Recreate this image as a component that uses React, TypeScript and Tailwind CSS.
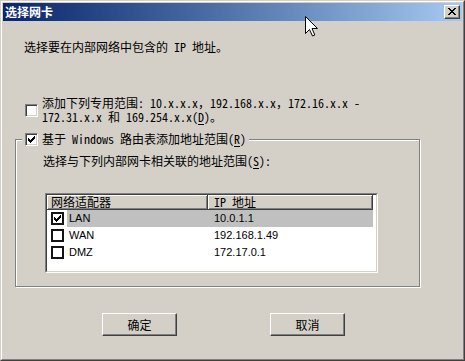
import React from "react";

const CHECK = [
  "......#",
  ".....##",
  "#...###",
  "##.###.",
  "#####..",
  ".###...",
  "..#....",
];

const XGLYPH = [
  "##....##",
  ".##..##.",
  "..####..",
  "...##...",
  "..####..",
  ".##..##.",
  "##....##",
];

function Pixels({ rows, color = "#000" }: { rows: string[]; color?: string }) {
  const w = rows[0].length;
  const h = rows.length;
  const rects: React.ReactNode[] = [];
  rows.forEach((r, y) =>
    r.split("").forEach((c, x) => {
      if (c === "#") rects.push(<rect key={`${x}-${y}`} x={x} y={y} width={1} height={1} fill={color} />);
    })
  );
  return (
    <svg width={w} height={h} viewBox={`0 0 ${w} ${h}`} shapeRendering="crispEdges" className="block">
      {rects}
    </svg>
  );
}

function Check3D({ checked }: { checked?: boolean }) {
  return (
    <span className="shrink-0 w-[13px] h-[13px] bg-white border border-t-[#808080] border-l-[#808080] border-r-white border-b-white shadow-[inset_1px_1px_0_#404040,inset_-1px_-1px_0_#d4d0c8] flex items-center justify-center">
      {checked ? <Pixels rows={CHECK} /> : null}
    </span>
  );
}

function ListCheck({ checked }: { checked?: boolean }) {
  return (
    <span className="shrink-0 w-[13px] h-[13px] bg-white border-2 border-[#141414] flex items-center justify-center">
      {checked ? <Pixels rows={CHECK} /> : null}
    </span>
  );
}

const rows = [
  { name: "LAN", ip: "10.0.1.1", checked: true, selected: true },
  { name: "WAN", ip: "192.168.1.49", checked: false, selected: false },
  { name: "DMZ", ip: "172.17.0.1", checked: false, selected: false },
];

export default function App() {
  return (
    <div className="relative w-[465px] h-[361px] overflow-hidden bg-[#d4d0c8] text-black text-[12px] [font-family:'Noto_Sans_Mono_CJK_SC','Noto_Sans_CJK_SC',sans-serif] border border-t-[#d4d0c8] border-l-[#d4d0c8] border-r-[#404040] border-b-[#404040]">
      <div className="h-full flex flex-col p-[1px] border border-t-white border-l-white border-r-[#808080] border-b-[#808080]">
        {/* Title bar */}
        <div className="h-[18px] shrink-0 flex items-center justify-between pl-[2px] pr-[2px] bg-linear-to-r from-[#0a246a] to-[#a6caf0]">
          <span className="text-white font-bold text-[12px] leading-[14px] [font-family:'Noto_Sans_CJK_SC',sans-serif]">选择网卡</span>
          <button className="w-[16px] h-[14px] bg-[#d4d0c8] border border-t-white border-l-white border-r-[#404040] border-b-[#404040] shadow-[inset_-1px_-1px_0_#808080] flex items-center justify-center pl-[0px] pb-[1px]">
            <Pixels rows={XGLYPH} />
          </button>
        </div>

        {/* Body */}
        <div className="flex flex-col flex-1">
          <div className="mt-[19px] ml-[21px] leading-[14px] whitespace-pre">选择要在内部网络中包含的 IP 地址。</div>

          <div className="mt-[42px] ml-[22px] flex items-center gap-[4px]">
            <Check3D />
            <div className="leading-[14px] whitespace-pre">
              <div>添加下列专用范围: 10.x.x.x，192.168.x.x，172.16.x.x -</div>
              <div>
                172.31.x.x 和 169.254.x.x(<u className="underline-offset-2">D</u>)。
              </div>
            </div>
          </div>

          <fieldset className="mt-[8px] ml-[12px] w-[405px] pb-[13px] border border-[#808080] shadow-[inset_1px_1px_0_#ffffff,1px_1px_0_#ffffff]">
            <legend className="ml-[6px] px-[3px] bg-[#d4d0c8]">
              <span className="flex items-center gap-[4px] h-[14px] leading-[14px] whitespace-pre">
                <Check3D checked />
                <span>
                  基于 Windows 路由表添加地址范围(<u className="underline-offset-2">R</u>)
                </span>
              </span>
            </legend>

            <div className="mt-[8px] ml-[27px] leading-[14px] whitespace-pre">
              选择与下列内部网卡相关联的地址范围(<u className="underline-offset-2">S</u>):
            </div>

            <div className="mt-[25px] ml-[29px] w-[333px] h-[80px] border border-t-[#808080] border-l-[#808080] border-r-white border-b-white">
              <div className="h-full bg-white border border-t-[#404040] border-l-[#404040] border-r-[#d4d0c8] border-b-[#d4d0c8] overflow-hidden">
                <div className="flex h-[15px]">
                  <div className="w-[161px] h-full flex items-center pl-[4px] bg-[#d4d0c8] border-r border-b border-r-[#404040] border-b-[#404040] shadow-[inset_1px_1px_0_#ffffff,inset_-1px_-1px_0_#808080] leading-[12px]">
                    网络适配器
                  </div>
                  <div className="w-[165px] h-full flex items-center pl-[6px] bg-[#d4d0c8] border-r border-b border-r-[#404040] border-b-[#404040] shadow-[inset_1px_1px_0_#ffffff,inset_-1px_-1px_0_#808080] leading-[12px] whitespace-pre">
                    IP 地址
                  </div>
                </div>
                {rows.map((r) => (
                  <div key={r.name} className="flex items-center h-[17px] pl-[4px]">
                    <ListCheck checked={r.checked} />
                    <div
                      className={
                        r.selected
                          ? "ml-[3px] w-[306px] h-full flex items-center bg-[#c0c0c0] text-[11px] [font-family:'Liberation_Sans',sans-serif]"
                          : "ml-[3px] w-[306px] h-full flex items-center text-[11px] [font-family:'Liberation_Sans',sans-serif]"
                      }
                    >
                      <span className="w-[141px] pl-[2px]">{r.name}</span>
                      <span className="pl-[6px]">{r.ip}</span>
                    </div>
                  </div>
                ))}
              </div>
            </div>
          </fieldset>

          <div className="mt-[26px] ml-[99px] flex gap-[93px]">
            <button className="w-[75px] h-[23px] bg-[#d4d0c8] border border-t-white border-l-white border-r-[#404040] border-b-[#404040] shadow-[inset_-1px_-1px_0_#808080] flex items-center justify-center text-[12px] leading-[14px]">
              确定
            </button>
            <button className="w-[75px] h-[23px] bg-[#d4d0c8] border border-t-white border-l-white border-r-[#404040] border-b-[#404040] shadow-[inset_-1px_-1px_0_#808080] flex items-center justify-center text-[12px] leading-[14px]">
              取消
            </button>
          </div>
        </div>
      </div>

      {/* Mouse cursor */}
      <svg className="absolute left-[304px] top-[15px]" width="13" height="21" viewBox="0 0 13 21">
        <path d="M0.5 0.5 V17.5 L4.5 13.5 L7.5 20 L9.8 19 L7 12.5 H12.5 Z" fill="#ffffff" stroke="#000000" strokeWidth="1" />
      </svg>
    </div>
  );
}
